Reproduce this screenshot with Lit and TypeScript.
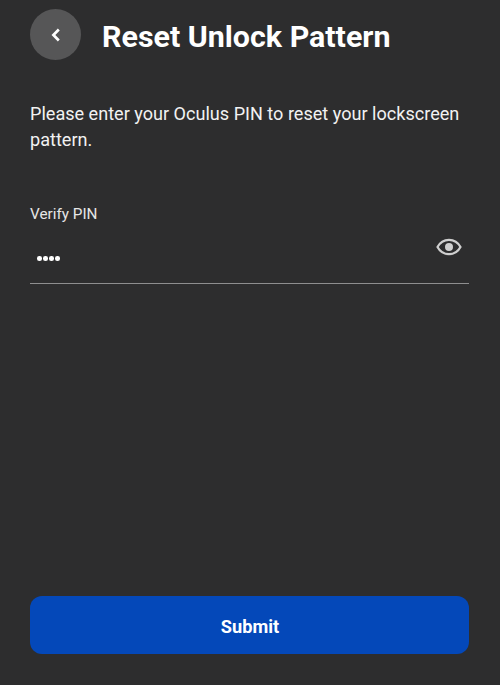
import { LitElement, html, css } from "lit";
import { customElement } from "lit/decorators.js";

@customElement("app-root")
export class AppRoot extends LitElement {
  static styles = css`
    :host {
      display: block;
      width: 500px;
      height: 685px;
      background: #2d2d2e;
      font-family: Roboto, "Liberation Sans", sans-serif;
      color: #fff;
    }
    .page {
      height: 685px;
      box-sizing: border-box;
      padding: 9px 31px 31px 30px;
      display: flex;
      flex-direction: column;
    }
    .header {
      display: flex;
      align-items: center;
      gap: 21px;
    }
    .back {
      width: 51px;
      height: 51px;
      border-radius: 50%;
      background: #565657;
      display: flex;
      align-items: center;
      justify-content: center;
      flex: none;
    }
    .back svg {
      display: block;
    }
    h1 {
      margin: 4px 0 0;
      font-size: 30.4px;
      line-height: 38px;
      font-weight: 700;
      color: #fff;
    }
    .intro {
      margin: 41px 0 0;
      font-size: 18.08px;
      line-height: 26px;
      color: #f2f2f2;
    }
    .label {
      margin-top: 52px;
      font-size: 15.3px;
      line-height: 18px;
      color: #e6e6e6;
    }
    .field {
      margin-top: 2px;
      height: 59px;
      box-sizing: border-box;
      border-bottom: 1px solid #8e8e8f;
      display: flex;
      align-items: center;
      justify-content: space-between;
      padding-right: 7px;
    }
    .dots {
      display: flex;
      gap: 1.5px;
      margin: 9px 0 0 7px;
    }
    .dot {
      width: 4.5px;
      height: 4.5px;
      border-radius: 50%;
      background: #fff;
    }
    .eye {
      display: block;
      margin-top: -14px;
    }
    .submit {
      margin-top: auto;
      height: 58px;
      border: none;
      border-radius: 12px;
      background: #0448b9;
      color: #fff;
      font: 700 18.2px Roboto, "Liberation Sans", sans-serif;
      padding: 2px 0 0 1px;
    }
  `;

  render() {
    return html`
      <div class="page">
        <div class="header">
          <div class="back">
            <svg width="12" height="16" viewBox="0 0 12 16" fill="none">
              <path d="M8.8 2.5 L3.4 8 L8.8 13.5" stroke="#fff" stroke-width="2.7" />
            </svg>
          </div>
          <h1>Reset Unlock Pattern</h1>
        </div>
        <p class="intro">Please enter your Oculus PIN to reset your lockscreen pattern.</p>
        <div class="label">Verify PIN</div>
        <div class="field">
          <div class="dots">
            <span class="dot"></span><span class="dot"></span><span class="dot"></span><span class="dot"></span>
          </div>
          <svg class="eye" width="26" height="18" viewBox="0 0 26 18" fill="none">
            <path d="M1.5 9 C4 4.3 8.2 1.8 13 1.8 C17.8 1.8 22 4.3 24.5 9 C22 13.7 17.8 16.2 13 16.2 C8.2 16.2 4 13.7 1.5 9 Z" stroke="#cfcfcf" stroke-width="2.2" />
            <circle cx="13" cy="9" r="4" fill="#cfcfcf" />
          </svg>
        </div>
        <button class="submit">Submit</button>
      </div>
    `;
  }
}
